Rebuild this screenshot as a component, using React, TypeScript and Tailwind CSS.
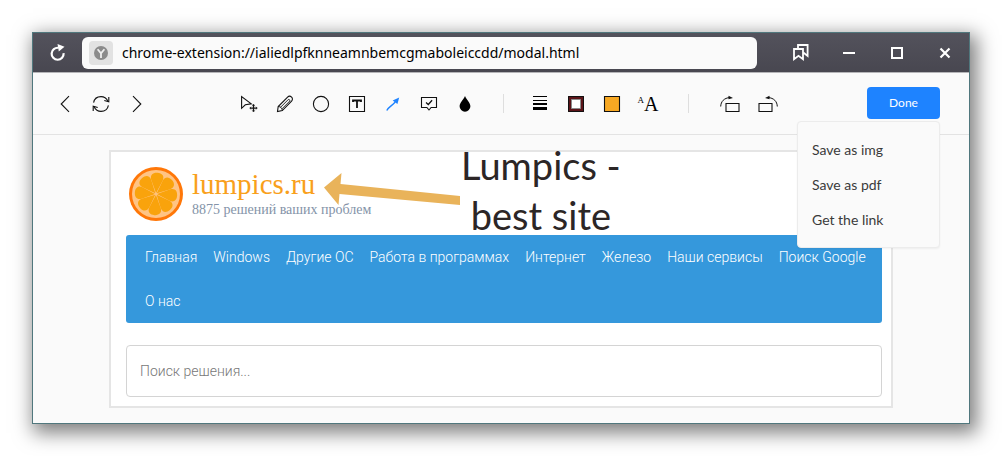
import type { ReactNode } from 'react';

const navLinks = [
  'Главная',
  'Windows',
  'Другие ОС',
  'Работа в программах',
  'Интернет',
  'Железо',
  'Наши сервисы',
  'Поиск Google',
  'О нас',
];

const saveOptions = ['Save as img', 'Save as pdf', 'Get the link'];

function IconButton({ label, className = 'w-9', children }: { label: string; className?: string; children: ReactNode }) {
  return (
    <button type="button" aria-label={label} className={`flex h-9 shrink-0 items-center justify-center ${className}`}>
      {children}
    </button>
  );
}

function Svg({ size = 18, children }: { size?: number; children: ReactNode }) {
  return (
    <svg width={size} height={size} viewBox={`0 0 ${size} ${size}`} fill="none" stroke="#111" strokeWidth="1.1">
      {children}
    </svg>
  );
}

function TitleBar() {
  return (
    <div className="flex h-10 items-center border-b border-[#b5b5b8] bg-linear-to-b from-[#53525c] to-[#484750]">
      <IconButton label="Reload" className="w-[49px]">
        <svg width="18" height="18" viewBox="0 0 18 18" fill="none" stroke="#fff" strokeWidth="2.2">
          <path d="M9.500 3.800A6 6 0 1 0 14.600 9.200" />
          <path d="M8.500 0 15.500 2.800 9.800 7.400Z" fill="#fff" stroke="none" />
        </svg>
      </IconButton>
      <div className="flex h-8 min-w-0 flex-1 items-center rounded-md bg-[#fafafa] pl-[7px]">
        <span className="flex size-6 shrink-0 items-center justify-center rounded-sm bg-[#e2e2e2]">
          <svg width="14" height="14" viewBox="0 0 14 14">
            <circle cx="7" cy="7" r="7" fill="#8b8b8b" />
            <path d="M3.6 3.2 7 7.4 10.4 3.2M7 7.2V12" fill="none" stroke="#eee" strokeWidth="1.8" />
          </svg>
        </span>
        <input
          aria-label="Address"
          defaultValue="chrome-extension://ialiedlpfknneamnbemcgmaboleiccdd/modal.html"
          className="ml-[9px] min-w-0 flex-1 bg-transparent font-['Noto_Sans',sans-serif] text-[14px] text-black outline-none"
        />
      </div>
      <div className="ml-5 flex">
        <IconButton label="Bookmarks" className="w-12">
          <svg width="16" height="17" viewBox="0 0 16 17" fill="none" stroke="#fff" strokeWidth="1.8">
            <path d="M1 5h9v10.2L5.5 11.8 1 15.2ZM5 5V1h9.6v11l-4-3.2" />
          </svg>
        </IconButton>
        <IconButton label="Minimize" className="w-12">
          <svg width="12" height="12" viewBox="0 0 12 12"><path d="M0 5h12v2H0Z" fill="#fff" /></svg>
        </IconButton>
        <IconButton label="Maximize" className="w-12">
          <svg width="12" height="12" viewBox="0 0 12 12"><path d="M1 1h10v10H1Z" fill="none" stroke="#fff" strokeWidth="2" /></svg>
        </IconButton>
        <IconButton label="Close" className="w-12">
          <svg width="12" height="12" viewBox="0 0 12 12"><path d="m1.5 1.5 9 9m0-9-9 9" stroke="#fff" strokeWidth="2.2" /></svg>
        </IconButton>
      </div>
    </div>
  );
}

function Divider({ className }: { className: string }) {
  return <span className={`h-[19px] w-px shrink-0 bg-[#dedede] ${className}`} />;
}

function Toolbar() {
  return (
    <div className="flex h-[62px] items-center border-b border-[#e3e3e3] pr-[29px] pl-[14px] font-['Lato',sans-serif]">
      <IconButton label="Undo"><Svg><path d="M13 1.2 5.2 9l7.8 7.8" /></Svg></IconButton>
      <IconButton label="Reset">
        <Svg>
          <path d="M1.6 7.6C2.3 4 5.3 1.6 9 1.6c3 0 5.5 1.6 6.8 4.4M16.4 10.4c-.7 3.6-3.7 6-7.4 6-3 0-5.5-1.6-6.8-4.4" />
          <path d="M16.8 2v4.8l-4.5-1.3M1.2 16v-4.8l4.5 1.3" />
        </Svg>
      </IconButton>
      <IconButton label="Redo"><Svg><path d="M5 1.2 12.8 9 5 16.8" /></Svg></IconButton>

      {/* Drawing tools */}
      <div className="ml-[76px] flex items-center">
        <IconButton label="Move">
          <Svg>
            <path d="M1.6 1.6v11.7l3.7-3.5 6-1Z" />
            <path d="M13.5 9.6v7M10 13.1h7" strokeWidth="1.3" />
            <path d="m12.3 10.8 1.2-1.5 1.2 1.5M12.3 15.4l1.2 1.5 1.2-1.5M11.2 11.9 9.7 13.1l1.5 1.2M15.8 11.9l1.5 1.2-1.5 1.2" strokeWidth=".7" />
          </Svg>
        </IconButton>
        <IconButton label="Pencil">
          <Svg>
            <path d="M1.5 16.5 2.2 11.5 11.6 2.1c1-1 2.9-1 4 0s1.1 2.9 0 4L6.3 15.6Z" />
            <path d="M2.2 11.5c2.4 0 4 1.6 4.1 4.1M4.5 12.3 12.3 4.5M6 13.8l7.8-7.8c.3-1-.6-1.8-1.5-1.5" strokeWidth=".9" />
          </Svg>
        </IconButton>
        <IconButton label="Ellipse"><Svg><circle cx="9" cy="9" r="7.6" /></Svg></IconButton>
        <IconButton label="Text">
          <Svg>
            <path d="M1.5 1.5h15v15h-15Z" />
            <path d="M5 7V5.5h8V7M9 5.5V13" strokeWidth="1.8" />
          </Svg>
        </IconButton>
        <IconButton label="Arrow">
          <Svg>
            <path d="M2.8 15.5c1.6-3.5 4.4-4 8.5-8.4" stroke="#1e83ff" strokeWidth="1.4" />
            <path d="M15.2 2.5 13.4 9 8.7 5.4Z" fill="#1e83ff" stroke="none" />
          </Svg>
        </IconButton>
        <IconButton label="Comment">
          <Svg>
            <path d="M1.5 2.5h15v10h-5.4L9 15l-2.1-2.5H1.5Z" />
            <path d="m6 7.5 2.3 2 3.8-4.2" strokeWidth="1.3" />
          </Svg>
        </IconButton>
        <IconButton label="Blur">
          <Svg><path d="M9 1c1.6 4 5.4 6.5 5.4 10.3a5.4 5.4 0 0 1-10.8 0C3.600 7.500 7.400 5 9 1Z" fill="#000" stroke="none" /></Svg>
        </IconButton>

        <Divider className="mr-[18px] ml-5" />

        <IconButton label="Line width">
          <Svg>
            <path d="M2 1h14v1H2ZM2 5h14v1H2ZM2 8h14v2H2ZM2 12h14v3H2Z" fill="#000" stroke="none" />
          </Svg>
        </IconButton>
        <IconButton label="Border color">
          <Svg>
            <path d="M3 3h12v12H3Z" stroke="#5b1418" strokeWidth="4" />
            <path d="M1.500 1.500h15v15h-15Z" stroke="#111" strokeWidth="1" />
            <path d="M4.500 4.500h9v9h-9Z" fill="#fff" stroke="#8b8b8b" strokeWidth="1" />
          </Svg>
        </IconButton>
        <IconButton label="Fill color">
          <Svg><path d="M1.5 1.500h15v15h-15Z" fill="#f7a823" stroke="#111" /></Svg>
        </IconButton>
        <IconButton label="Font">
          <span className="flex font-['Liberation_Serif',serif] text-black">
            <span className="text-[9px] leading-3">A</span>
            <span className="text-[20px] leading-5">A</span>
          </span>
        </IconButton>

        <Divider className="mx-[22px]" />

        <IconButton label="Rotate left" className="w-[38px]">
          <Svg size={20}>
            <path d="M6 9.500h13v8H6Z" />
            <path d="M.7 12.500C.9 7.500 4 4 10 3.500" strokeWidth="1" />
            <path d="M8.500 1.800 13 3.900 8.500 5.200Z" fill="#111" stroke="none" />
          </Svg>
        </IconButton>
        <IconButton label="Rotate right" className="w-[38px]">
          <Svg size={20}>
            <path d="M1 9.500h13v8H1Z" />
            <path d="M19.300 12.500C19.100 7.500 16 4 10 3.500" strokeWidth="1" />
            <path d="M11.500 1.800 7 3.900 11.500 5.200Z" fill="#111" stroke="none" />
          </Svg>
        </IconButton>
      </div>

      {/* Done + save menu */}
      <div className="relative ml-auto">
        <button type="button" className="mb-px block h-8 w-[73px] rounded-sm bg-[#1e83ff] text-[12px] text-white">Done</button>
        <div className="absolute top-[34px] right-0 z-10 flex w-[143px] flex-col rounded-sm border border-[#ececec] bg-[#fafafa] py-2.5 shadow-xs">
          {saveOptions.map(option => (
            <button key={option} type="button" className="h-[35px] pl-[14px] text-left text-[14px] text-[#3a3a3a]">
              {option}
            </button>
          ))}
        </div>
      </div>
    </div>
  );
}

function OrangeLogo() {
  return (
    <svg width="56" height="56" viewBox="0 0 56 56" className="shrink-0">
      <circle cx="28" cy="28" r="27" fill="#ff7708" />
      <circle cx="28" cy="28" r="24" fill="#ffc484" />
      {[4, 49, 94, 139, 184, 229, 274, 319].map(angle => (
        <path
          key={angle}
          d="M28 27 22.200 14C20.600 9.500 23.500 6.800 28 6.800S35.400 9.500 33.800 14Z"
          fill="#f9a30c"
          transform={`rotate(${angle} 28 28)`}
        />
      ))}
    </svg>
  );
}

function Canvas() {
  return (
    <div className="relative border-2 border-[#e5e5e5] bg-white pr-[9px] pb-[9px] pl-[15px]">
      <header className="flex h-[83px] items-center pl-0.5">
        <OrangeLogo />
        <div className="ml-2 font-['Liberation_Serif',serif]">
          <a href="#" className="block text-[29px] leading-8 text-[#f9a01b]">lumpics.ru</a>
          <p className="text-[14px] leading-5 text-[#8493a8]">8875 решений ваших проблем</p>
        </div>
      </header>

      <nav className="flex flex-wrap gap-x-4 rounded-[3px] bg-[#3598dc] pl-[19px] font-['Roboto',sans-serif] text-[14px] leading-[44px] font-light text-white">
        {navLinks.map(link => (
          <a key={link} href="#">{link}</a>
        ))}
      </nav>

      <input
        type="search"
        aria-label="Поиск"
        placeholder="Поиск решения..."
        className="mt-[22px] block h-[52px] w-full rounded-sm border border-[#d4d4d4] px-[13px] font-['Roboto',sans-serif] text-[14px] font-light outline-none placeholder:text-[#777]"
      />

      {/* Annotations drawn on top of the capture */}
      <svg width="140" height="40" viewBox="0 0 140 40" className="absolute top-5 left-[212px]">
        <path d="M1 15.500 18.500 1 17.500 12 137 24V33L16.500 22 15.500 33Z" fill="#e9b35a" />
      </svg>
      <p className="absolute top-[-12px] left-[350px] text-center font-['Lato',cursive] text-[38px] leading-[50px] whitespace-pre text-[#2c2626]">
        {'Lumpics -\nbest site'}
      </p>
    </div>
  );
}

export default function App() {
  return (
    <div className="bg-white p-8">
      <div className="border border-[#50777d] bg-[#fafafa] shadow-[4px_6px_18px_3px_rgba(0,0,0,0.5)]">
        <TitleBar />
        <Toolbar />
        <main className="px-[76px] py-[15px]">
          <Canvas />
        </main>
      </div>
    </div>
  );
}
